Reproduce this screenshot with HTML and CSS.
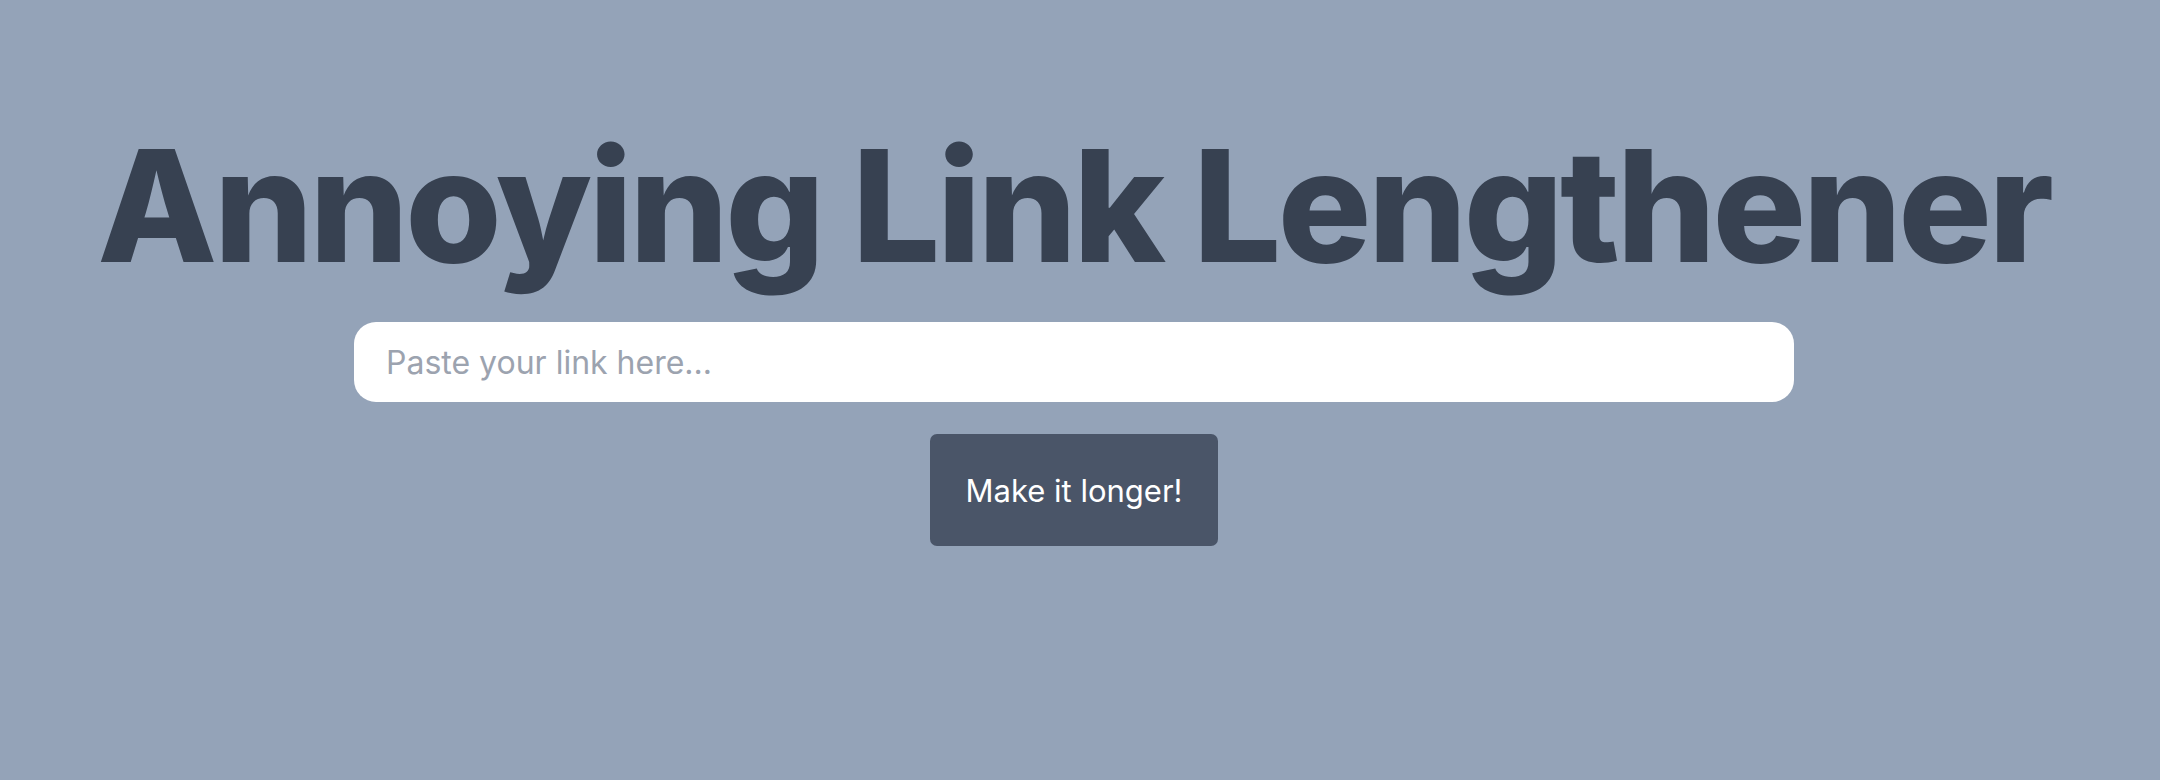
FILE: index.html
```html
<!DOCTYPE html>
<html lang="en">
<head>
<meta charset="utf-8">
<title>Annoying Link Lengthener</title>
<link rel="stylesheet" href="styles.css">
</head>
<body>
<main class="page">
  <h1 class="title">Annoying Link Lengthener</h1>
  <form class="form">
    <input class="link-input" type="text" placeholder="Paste your link here...">
    <button class="submit" type="button">Make it longer!</button>
  </form>
</main>
</body>
</html>
```

FILE: styles.css
```css
html, body {
  margin: 0;
  padding: 0;
}
body {
  background: #94a3b8;
  min-height: 100vh;
  font-family: Inter, "Noto Sans", sans-serif;
}
.page {
  display: flex;
  flex-direction: column;
  align-items: center;
  padding-top: 128px;
  padding-right: 12px;
}
.title {
  margin: 0;
  font-family: Inter, sans-serif;
  font-weight: 800;
  font-size: 156px;
  line-height: 156px;
  letter-spacing: -0.022em;
  color: #374151;
  white-space: nowrap;
}
.form {
  display: flex;
  flex-direction: column;
  align-items: center;
  gap: 32px;
  margin-top: 38px;
}
.link-input {
  box-sizing: border-box;
  width: 1440px;
  height: 80px;
  border: none;
  border-radius: 22px;
  padding: 0 32px;
  font-family: Inter, sans-serif;
  font-size: 32px;
  color: #111827;
  background: #fff;
  outline: none;
}
.link-input::placeholder {
  color: #9ca3af;
}
.submit {
  box-sizing: border-box;
  width: 288px;
  height: 112px;
  border: none;
  border-radius: 7px;
  background: #4a5568;
  color: #fff;
  font-family: Inter, sans-serif;
  font-size: 31px;
  font-weight: 400;
}
```
